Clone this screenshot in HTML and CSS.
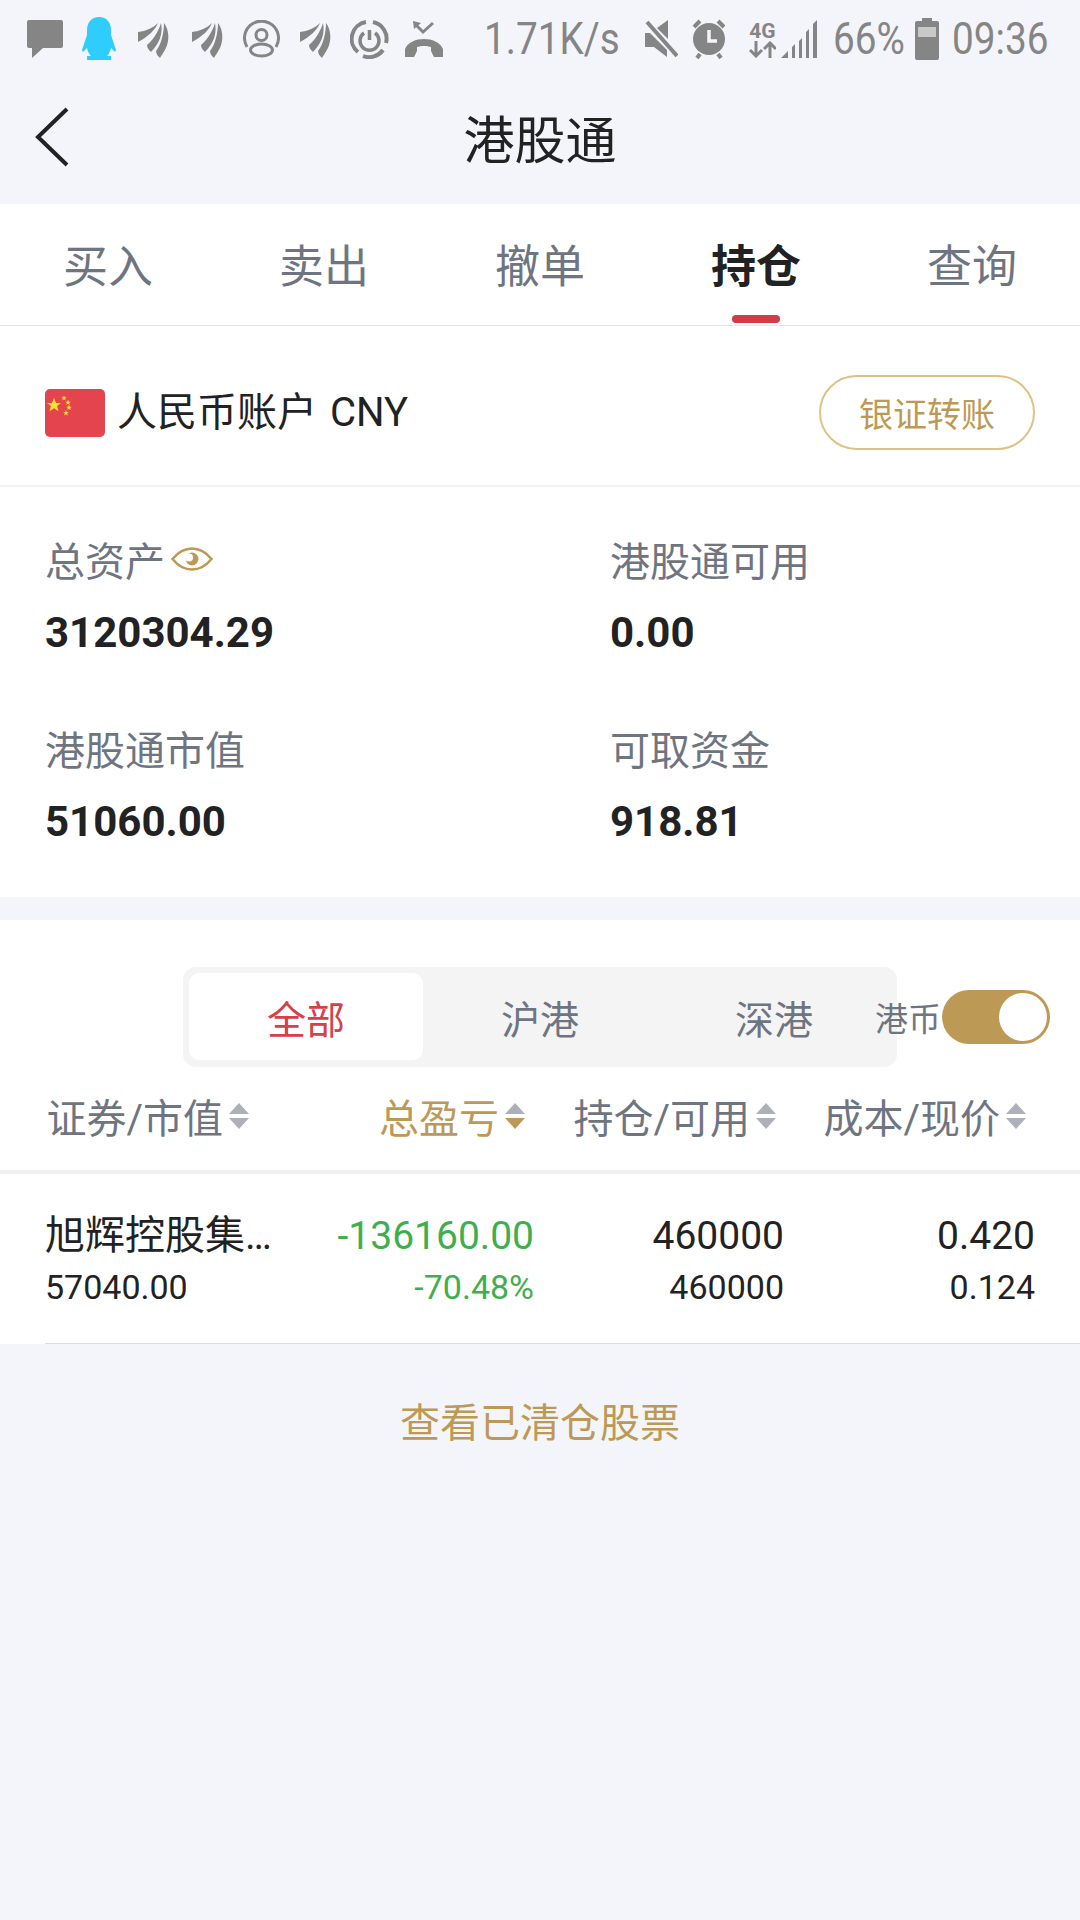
FILE: index.html
```html
<!DOCTYPE html>
<html lang="zh-CN">
<head>
    <meta charset="UTF-8">
    <meta name="viewport" content="width=device-width, initial-scale=1.0">
    <title>港股通</title>
    <link rel="stylesheet" href="styles.css">
</head>
<body>
    <svg class="defs" width="0" height="0">
        <defs>
            <g id="feather">
                <path d="M0 11C8 10 15 7 20 2C18 8 10 16 0 21Z"/>
                <path d="M9 24C14 20 20 12 23 2C25 12 22 22 13 31C11 29 9 27 9 24Z"/>
                <path d="M18 30C23 24 26 12 26 2C30 7 31 15 30 20C29 27 25 32 22 37C20 35 18 33 18 30Z"/>
            </g>
            <path id="star" d="M0-5L1.500-1.500H5L2.200 .8L3.200 4.500L0 2.400L-3.200 4.500L-2.200 .8L-5-1.500H-1.500Z"/>
        </defs>
    </svg>

    <div class="status-bar">
        <svg class="ic-chat" width="36" height="38" viewBox="0 0 36 38"><path fill="#858585" d="M2 0H34a2 2 0 0 1 2 2V26a2 2 0 0 1-2 2H16L5 38V28H2a2 2 0 0 1-2-2V2A2 2 0 0 1 2 0Z"/></svg>
        <svg class="ic-qq" width="34" height="43" viewBox="0 0 34 43"><path fill="#2fcdfd" d="M17 0C25 0 29 6 29 13V18L34 33L33 35L29 31C28 35 27 37 25 39H29V43H5V39H9C7 37 6 35 5 31L1 35L0 33L5 18V13C5 6 9 0 17 0Z"/></svg>
        <svg class="ic-feather" width="31" height="37" viewBox="0 0 31 37" fill="#858585"><use href="#feather"/></svg>
        <svg class="ic-feather second" width="31" height="37" viewBox="0 0 31 37" fill="#858585"><use href="#feather"/></svg>
        <svg class="ic-person" width="37" height="38" viewBox="0 0 37 38" fill="none" stroke="#858585" stroke-width="3"><path d="M4 27A17 17 0 1 1 33 27"/><circle cx="18.500" cy="15" r="5.500"/><ellipse cx="18.500" cy="30" rx="11" ry="6"/></svg>
        <svg class="ic-feather third" width="31" height="37" viewBox="0 0 31 37" fill="#858585"><use href="#feather"/></svg>
        <svg class="ic-power" width="39" height="40" viewBox="0 0 39 40" fill="none" stroke="#858585"><path stroke-width="4" d="M16 3A17 17 0 0 0 8 33M13 37A17 17 0 0 0 33 31M36 24A17 17 0 0 0 23 3"/><path stroke-width="3.500" d="M14 14A9.500 9.500 0 1 0 25 14M19.500 11V21"/></svg>
        <svg class="ic-call" width="38" height="36" viewBox="0 0 38 36" fill="#858585"><path d="M0 36V28C3 21 11 18 19 18S35 21 38 28V36H29L26 30V26C22 24.500 16 24.500 12 26V30L9 36Z"/><path fill="none" stroke="#858585" stroke-width="3" d="M28 2L18 11L11 4"/><path d="M8 0L16 2L9 8Z"/></svg>
        <span class="speed">1.71K/s</span>
        <svg class="ic-mute" width="33" height="38" viewBox="0 0 33 38" fill="#858585"><path d="M0 13H5L22 30V37L9 27H0ZM12 8L23 0V19Z"/><path stroke="#858585" stroke-width="4" d="M2 2L32 36"/></svg>
        <svg class="ic-alarm" width="34" height="42" viewBox="0 0 34 42"><circle cx="17" cy="21" r="16" fill="#858585"/><path stroke="#858585" stroke-width="4" d="M2 9L8 3M32 9L26 3M5 40L8 36M29 40L26 36"/><path fill="none" stroke="#f4f5fa" stroke-width="3.500" d="M17 12V23H25"/></svg>
        <div class="net">
            <span class="net-label">4G</span>
            <svg width="27" height="17" viewBox="0 0 27 17" fill="none" stroke="#858585" stroke-width="3"><path d="M7 0V15M1 9L7 15L13 9M21 17V2M15 8L21 2L27 8"/></svg>
        </div>
        <svg class="ic-signal" width="36" height="38" viewBox="0 0 36 38" fill="#858585"><path d="M0 38L7 31V38ZM11 27L14 24V38H11ZM18 21L21 18V38H18ZM25 12L28 9V38H25ZM32 4L36 0V38H32Z"/></svg>
        <span class="pct">66%</span>
        <svg class="ic-battery" width="24" height="42" viewBox="0 0 24 42"><path fill="#858585" d="M7 0H17V3H22a2 2 0 0 1 2 2V40a2 2 0 0 1-2 2H2a2 2 0 0 1-2-2V5A2 2 0 0 1 2 3H7Z"/><rect x="3" y="9" width="18" height="10" fill="#c8c8ca"/></svg>
        <span class="clock">09:36</span>
    </div>

    <header class="nav-bar">
        <svg class="back" width="34" height="60" viewBox="0 0 34 60" fill="none" stroke="#222" stroke-width="4"><path d="M32 2L3 30L32 58"/></svg>
        <h1>港股通</h1>
    </header>

    <nav class="tabs">
        <a class="tab">买入</a>
        <a class="tab">卖出</a>
        <a class="tab">撤单</a>
        <a class="tab active">持仓</a>
        <a class="tab">查询</a>
    </nav>

    <section class="account">
        <svg class="flag" width="60" height="48" viewBox="0 0 60 48">
            <rect width="60" height="48" rx="5" fill="#e4444e"/>
            <g fill="#fce02f">
                <use href="#star" transform="translate(9 16) scale(1.400)"/>
                <use href="#star" transform="translate(19 9) scale(.55)"/>
                <use href="#star" transform="translate(23 13.500) scale(.55)"/>
                <use href="#star" transform="translate(24 18.500) scale(.55)"/>
                <use href="#star" transform="translate(21 24) scale(.55)"/>
            </g>
        </svg>
        <span class="account-name">人民币账户 CNY</span>
        <button class="transfer">银证转账</button>
    </section>

    <section class="assets">
        <div class="asset">
            <div class="asset-label">总资产
                <svg class="eye" width="42" height="24" viewBox="0 0 42 24"><path fill="none" stroke="#bc9a56" stroke-width="2.500" d="M1.500 12C8 4 14 1.500 21 1.500S34 4 40.500 12C34 20 28 22.500 21 22.500S8 20 1.500 12Z"/><circle cx="21" cy="12" r="6.500" fill="#bc9a56"/><circle cx="18" cy="10.500" r="4" fill="#fff"/></svg>
            </div>
            <div class="asset-value">3120304.29</div>
        </div>
        <div class="asset">
            <div class="asset-label">港股通可用</div>
            <div class="asset-value">0.00</div>
        </div>
        <div class="asset">
            <div class="asset-label">港股通市值</div>
            <div class="asset-value">51060.00</div>
        </div>
        <div class="asset">
            <div class="asset-label">可取资金</div>
            <div class="asset-value">918.81</div>
        </div>
    </section>

    <section class="holdings">
        <div class="filter-row">
            <div class="segment">
                <a class="seg active">全部</a>
                <a class="seg">沪港</a>
                <a class="seg">深港</a>
            </div>
            <span class="hkd">港币</span>
            <div class="toggle"><span class="knob"></span></div>
        </div>

        <div class="col-head">
            <div class="col col-name">证券/市值<i class="sort"></i></div>
            <div class="col col-pl gold">总盈亏<i class="sort down"></i></div>
            <div class="col col-qty">持仓/可用<i class="sort"></i></div>
            <div class="col col-cost">成本/现价<i class="sort"></i></div>
        </div>

        <div class="stock-row">
            <div class="cell cell-name">
                <div class="big name">旭辉控股集…</div>
                <div class="small">57040.00</div>
            </div>
            <div class="cell cell-pl green">
                <div class="big">-136160.00</div>
                <div class="small">-70.48%</div>
            </div>
            <div class="cell cell-qty">
                <div class="big">460000</div>
                <div class="small">460000</div>
            </div>
            <div class="cell cell-cost">
                <div class="big">0.420</div>
                <div class="small">0.124</div>
            </div>
        </div>
    </section>

    <a class="closed-link">查看已清仓股票</a>
</body>
</html>
```

FILE: styles.css
```css
* {
    box-sizing: border-box;
}

body {
    margin: 0;
    height: 1920px;
    overflow: hidden;
    background: #f4f5fa;
    color: #222;
    font-family: Roboto, "Noto Sans CJK SC", sans-serif;
}

.defs {
    display: block;
    height: 0;
}

/* status bar */
.status-bar {
    display: flex;
    align-items: center;
    height: 78px;
    padding-left: 27px;
    color: #858585;
}

.status-bar svg {
    flex: none;
}

.ic-qq { margin-left: 19px; margin-top: -2px; }
.ic-feather { margin-left: 22px; }
.ic-feather.second { margin-left: 23px; }
.ic-feather.third { margin-left: 20px; }
.ic-person { margin-left: 20px; }
.ic-power { margin-left: 19px; }
.ic-call { margin-left: 16px; }
.ic-mute { margin-left: 25px; }
.ic-alarm { margin-left: 14px; }
.ic-signal { margin-left: 5px; }
.ic-battery { margin-left: 13px; }

/* no condensed face installed, so squeeze Roboto */
.speed,
.pct,
.clock {
    flex: none;
    font-size: 44px;
    line-height: 1;
    white-space: nowrap;
    transform: scaleX(.88);
    transform-origin: left center;
}

.speed { margin-left: 41px; width: 136px; }
.pct { margin-left: 16px; width: 69px; }
.clock { margin-left: 13px; width: 96px; }

.net {
    display: flex;
    flex-direction: column;
    align-items: center;
    width: 27px;
    margin-left: 23px;
}

.net-label {
    font-size: 21px;
    font-weight: 700;
    line-height: 20px;
}

.net svg {
    display: block;
}

/* title */
.nav-bar {
    display: flex;
    align-items: center;
    justify-content: center;
    position: relative;
    height: 126px;
}

.nav-bar h1 {
    margin: 0;
    font-size: 51px;
    font-weight: 400;
    line-height: 1;
}

.back {
    position: absolute;
    left: 35px;
    top: 29px;
}

/* tabs */
.tabs {
    display: flex;
    height: 122px;
    background: #fff;
    border-bottom: 1px solid #e6e6e8;
}

.tab {
    flex: 1;
    position: relative;
    padding-top: 36px;
    text-align: center;
    font-size: 45px;
    line-height: 56px;
    color: #6f7580;
}

.tab.active {
    color: #222;
    font-weight: 700;
}

.tab.active::after {
    content: "";
    position: absolute;
    left: 84px;
    bottom: 2px;
    width: 48px;
    height: 8px;
    border-radius: 4px;
    background: #d23c45;
}

/* account */
.account {
    display: flex;
    align-items: center;
    height: 161px;
    padding: 14px 45px 0;
    background: #fff;
    border-bottom: 2px solid #f3f3f5;
}

.account-name {
    margin-left: 12px;
    font-size: 40px;
    line-height: 1;
    word-spacing: 3px;
}

.transfer {
    margin-left: auto;
    width: 216px;
    height: 75px;
    padding: 0;
    border: 2px solid #dcc287;
    border-radius: 38px;
    background: #fff;
    color: #bc9a56;
    font-family: inherit;
    font-size: 34px;
}

/* assets */
.assets {
    display: grid;
    grid-template-columns: 565px 1fr;
    grid-auto-rows: 189px;
    height: 410px;
    padding: 42px 0 0 45px;
    background: #fff;
}

.asset-label {
    display: flex;
    align-items: center;
    gap: 6px;
    height: 60px;
    font-size: 40px;
    color: #6f7580;
}

.asset-value {
    margin-top: 19px;
    font-size: 42px;
    font-weight: 700;
    line-height: 50px;
}

/* holdings */
.holdings {
    margin-top: 23px;
    background: #fff;
}

.filter-row {
    display: flex;
    align-items: center;
    height: 147px;
    padding: 47px 0 0 183px;
}

.segment {
    display: flex;
    width: 714px;
    height: 100px;
    padding: 6px 6px 7px;
    border-radius: 13px;
    background: #f4f4f4;
}

.seg {
    flex: 1;
    display: flex;
    align-items: center;
    justify-content: center;
    border-radius: 10px;
    font-size: 39px;
    color: #6f7580;
}

.seg.active {
    background: #fff;
    color: #d6404a;
}

.hkd {
    margin-left: -22px;
    width: 67px;
    font-size: 33px;
    white-space: nowrap;
    color: #6f7580;
}

.toggle {
    display: flex;
    align-items: center;
    justify-content: flex-end;
    width: 108px;
    height: 54px;
    padding-right: 3px;
    border-radius: 27px;
    background: #bc9a56;
}

.knob {
    width: 48px;
    height: 48px;
    border-radius: 50%;
    background: #fff;
}

.col-head {
    display: flex;
    height: 107px;
    border-bottom: 4px solid #f0f0f2;
    color: #6f7580;
    font-size: 40px;
}

.col {
    display: flex;
    align-items: center;
    justify-content: flex-end;
    height: 95px;
    padding-top: 2px;
    white-space: nowrap;
}

.col-name { width: 249px; }
.col-pl { width: 276px; }
.col-qty { width: 251px; }
.col-cost { width: 250px; }

.gold {
    color: #bc9a56;
}

.sort {
    flex: none;
    position: relative;
    width: 20px;
    height: 26px;
    margin-left: 6px;
}

.sort::before,
.sort::after {
    content: "";
    position: absolute;
    left: 0;
    border-left: 10px solid transparent;
    border-right: 10px solid transparent;
}

.sort::before {
    top: 0;
    border-bottom: 11px solid #aeb0b9;
}

.sort::after {
    bottom: 0;
    border-top: 11px solid #aeb0b9;
}

.sort.down::after {
    border-top-color: #bc9a56;
}

.stock-row {
    display: flex;
    height: 170px;
    margin-left: 45px;
    padding-top: 38px;
    border-bottom: 1px solid #dcdcde;
}

.cell {
    text-align: right;
}

.cell-name { width: 241px; text-align: left; }
.cell-pl { width: 248px; }
.cell-qty { width: 250px; }
.cell-cost { width: 251px; }

.green {
    color: #3fae4e;
}

.big {
    font-size: 39px;
    line-height: 48px;
    white-space: nowrap;
}

.big.name {
    font-size: 40px;
}

.small {
    margin-top: 7px;
    font-size: 34px;
    line-height: 40px;
    white-space: nowrap;
}

.closed-link {
    display: block;
    margin-top: 55px;
    text-align: center;
    font-size: 40px;
    line-height: 50px;
    color: #bc9a56;
}
```
